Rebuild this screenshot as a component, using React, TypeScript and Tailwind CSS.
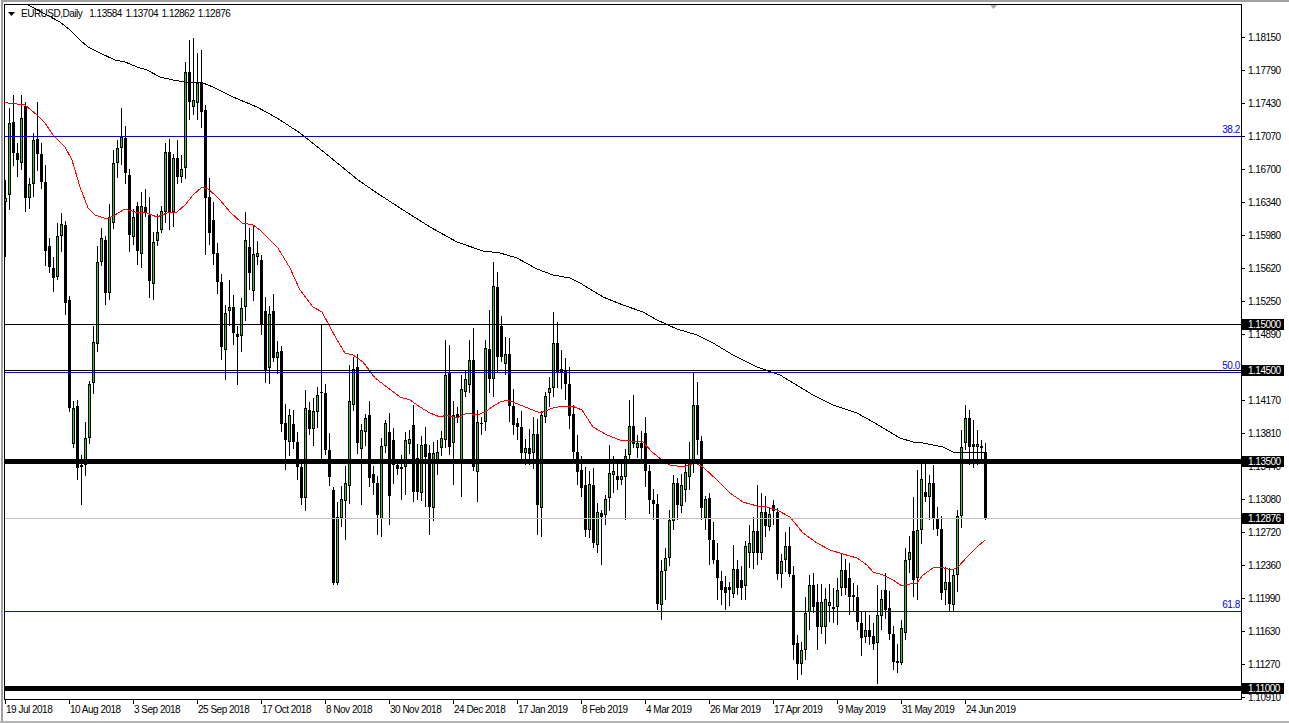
import React from "react";

// candle bodies in screen pixels: x, top, bottom, kind (g = up, b = down, d = doji)
const BARS = `5,198,202,g 9,123,195,g 13,122,153,b 17,153,160,b 21,118,163,g 25,106,198,b 29,184,198,g 33,140,184,g 37,139,154,b 41,154,182,b
45,182,251,b 49,246,267,b 53,268,278,b 57,236,277,g 61,224,236,g 65,225,303,b 69,300,408,b 73,408,444,g 77,406,468,b 81,465,467,d
85,438,465,g 89,384,438,g 93,342,383,g 97,262,344,g 101,238,262,g 105,240,293,b 109,217,293,g 113,163,223,g 117,148,163,g 121,137,148,g
125,138,173,b 129,175,235,b 133,217,237,g 137,206,251,b 141,206,254,g 145,207,213,b 149,215,281,b 153,242,284,g 157,232,241,g 161,211,230,g
165,152,212,g 169,152,213,b 173,158,212,g 177,158,177,b 181,169,177,g 185,72,168,g 189,72,102,b 193,100,107,g 197,83,103,g 201,82,112,b
205,110,198,b 209,197,233,b 213,220,254,b 217,253,282,b 221,282,347,b 225,313,350,g 229,307,311,g 233,307,333,b 237,334,337,b 241,308,336,g
245,240,307,g 249,247,273,b 253,254,291,g 257,253,257,g 261,260,325,b 265,311,370,b 269,314,368,g 273,311,358,b 277,352,358,g 281,351,424,b
285,423,440,b 289,415,442,g 293,424,442,b 297,442,467,b 301,467,498,b 305,408,498,g 309,410,429,b 313,411,429,g 317,395,412,g 321,392,393,d
325,393,450,b 329,450,477,b 333,490,583,b 337,517,583,g 341,499,518,g 345,483,501,g 349,401,486,g 353,369,405,g 357,367,443,b 361,430,449,g
365,418,432,g 369,415,478,b 373,474,483,b 377,483,515,b 381,446,519,g 385,423,446,g 389,432,496,b 393,440,465,b 397,465,469,b 401,467,469,g
405,440,467,g 409,439,444,g 413,425,492,b 417,458,492,b 421,445,493,g 425,444,457,b 429,453,507,b 433,453,508,g 437,452,463,g 441,438,448,g
445,375,440,g 449,373,447,b 453,415,443,g 457,414,417,d 461,389,460,g 465,379,392,g 469,360,385,g 473,360,467,b 477,422,472,g 481,423,424,d
485,348,422,g 489,349,379,b 493,286,379,g 497,287,357,b 501,326,357,b 505,354,364,g 509,354,406,b 513,406,425,b 517,423,427,d 521,427,453,b
525,448,453,g 529,448,454,d 533,434,453,g 537,434,505,b 541,415,508,g 545,396,417,g 549,388,393,g 553,343,388,g 557,343,373,b 561,369,373,d
565,371,384,b 569,384,416,b 573,414,452,b 577,452,472,b 581,470,488,b 585,485,530,b 589,484,530,g 593,485,543,b 597,512,545,g 601,513,517,d
605,499,515,g 609,473,498,g 613,471,475,g 617,476,480,b 621,476,480,g 625,456,477,g 629,426,455,g 633,426,444,b 637,443,448,g 641,443,448,d
645,433,471,b 649,471,500,b 653,500,504,d 657,504,604,b 661,571,605,g 665,558,571,g 669,520,558,g 673,483,521,g 677,483,505,b 681,485,506,g
685,472,490,g 689,463,477,g 693,405,463,g 697,405,440,b 701,441,508,b 705,499,518,g 709,498,540,b 713,540,560,b 717,560,578,b 721,581,590,b
725,587,593,b 729,587,590,d 733,569,594,g 737,569,588,b 741,580,588,b 745,546,586,g 749,543,553,g 753,531,553,g 757,531,553,b 761,512,553,g
765,512,526,b 769,514,527,g 773,505,511,d 777,512,574,b 781,561,574,g 785,546,560,g 789,546,574,b 793,575,645,b 797,643,664,b 801,650,664,g
805,613,650,g 809,585,612,g 813,585,607,b 817,602,627,b 821,602,627,g 825,599,627,g 829,602,606,g 833,607,609,d 837,590,607,g 841,570,588,g
845,570,588,b 849,578,597,b 853,595,597,d 857,597,622,b 861,623,638,b 865,630,637,g 869,630,637,b 873,636,644,b 877,615,643,g 881,599,616,g
885,590,610,b 889,608,634,b 893,634,662,b 897,661,663,d 901,628,663,g 905,560,633,g 909,552,560,g 913,531,580,b 917,530,578,g 921,479,530,g
925,492,497,b 929,483,497,g 933,483,518,b 937,518,529,b 941,529,593,b 945,582,590,g 949,582,604,b 953,575,605,g 957,516,575,g 961,447,516,g
965,418,443,g 969,418,447,b 973,444,447,d 977,444,447,g 981,446,448,d 985,452,518,b`;

// known long shadows: x -> [high, low]
const WICKS: Record<number, [number | null, number | null]> = {
  5: [180, 257], 9: [108, 210], 13: [95, null], 21: [95, 170], 25: [102, null], 37: [102, null],
  69: [null, 412], 77: [null, 480], 81: [455, 505], 121: [108, null], 125: [126, null], 129: [null, 252],
  149: [null, 298], 153: [null, 300], 185: [62, null], 189: [40, 120], 193: [38, 115], 197: [53, 120],
  201: [50, null], 205: [null, 255], 213: [null, 265], 225: [null, 380], 229: [280, null], 233: [295, 345],
  237: [null, 385], 245: [212, null], 253: [225, null], 261: [null, 335], 265: [null, 383], 281: [null, 432],
  285: [null, 470], 297: [null, 480], 301: [null, 505], 305: [390, null], 321: [325, 460], 333: [null, 585],
  337: [null, 585], 341: [null, 527], 345: [null, 540], 349: [365, null], 353: [357, null], 361: [null, 505],
  369: [null, 487], 373: [null, 495], 377: [null, 535], 381: [null, 537], 389: [null, 525], 401: [null, 500],
  405: [null, 495], 413: [405, null], 417: [null, 500], 425: [null, 507], 429: [null, 535], 445: [340, null],
  449: [345, null], 453: [null, 485], 461: [null, 497], 469: [340, null], 473: [328, null], 477: [null, 502],
  485: [340, null], 489: [310, null], 493: [262, null], 497: [272, null], 509: [null, 422], 537: [null, 535],
  541: [null, 537], 553: [312, 397], 557: [322, null], 577: [null, 485], 585: [null, 537], 597: [null, 553],
  601: [null, 565], 605: [null, 525], 609: [445, null], 625: [null, 520], 629: [400, null], 633: [395, null],
  653: [null, 520], 657: [null, 610], 661: [null, 620], 665: [null, 600], 673: [null, 530], 677: [null, 520],
  689: [442, null], 693: [372, null], 697: [382, 455], 701: [null, 520], 705: [null, 530], 709: [null, 565],
  717: [null, 600], 721: [null, 605], 725: [null, 610], 733: [545, null], 745: [null, 600], 757: [485, null],
  761: [493, 560], 773: [null, 525], 777: [null, 580], 793: [null, 660], 797: [null, 680], 801: [null, 675],
  805: [null, 660], 809: [575, 630], 817: [null, 650], 829: [null, 622], 833: [588, null], 837: [null, 625],
  845: [null, 595], 849: [null, 615], 857: [null, 630], 865: [null, 643], 873: [null, 650], 877: [585, 684],
  881: [590, null], 889: [null, 640], 893: [null, 670], 901: [null, 665], 905: [null, 640], 913: [497, null],
  917: [470, 600], 921: [463, null], 925: [460, null], 929: [null, 520], 933: [null, 530], 941: [null, 600],
  949: [null, 612], 953: [null, 612], 957: [510, null], 961: [null, 528], 965: [405, 450], 969: [410, 465],
  973: [420, 468], 977: [430, 465], 981: [440, 462], 985: [443, 520],
};

const MA200 = [
  [26, 4], [28, 5], [47, 15], [60, 22], [70, 30], [80, 40], [88, 47], [100, 53], [115, 60], [125, 62], [137, 67],
  [147, 70], [160, 77], [173, 80], [185, 82], [203, 83], [213, 87], [233, 97], [257, 107], [277, 118], [300, 133],
  [330, 157], [358, 180], [377, 193], [400, 208], [430, 227], [457, 242], [483, 251], [500, 253], [517, 258],
  [537, 269], [553, 275], [570, 278], [580, 283], [603, 297], [623, 305], [643, 312], [657, 320], [677, 329],
  [697, 335], [713, 343], [733, 355], [757, 367], [780, 375], [813, 395], [833, 405], [857, 413], [873, 422],
  [900, 438], [913, 442], [923, 443], [943, 447], [953, 452], [985, 452],
];

const MA50 = [
  [5, 102], [8, 103], [25, 105], [37, 115], [45, 123], [53, 135], [65, 147], [72, 160], [80, 187], [88, 208],
  [95, 215], [107, 219], [115, 215], [125, 209], [135, 212], [147, 213], [157, 217], [167, 213], [177, 212],
  [185, 205], [193, 195], [202, 187], [208, 189], [215, 195], [220, 200], [230, 212], [242, 223], [253, 225],
  [260, 230], [270, 240], [278, 248], [290, 268], [300, 290], [313, 307], [322, 312], [330, 327], [337, 340],
  [345, 353], [353, 355], [363, 362], [375, 378], [387, 387], [400, 397], [410, 400], [420, 407], [430, 413],
  [440, 417], [447, 415], [457, 418], [467, 413], [477, 415], [485, 412], [492, 407], [500, 402], [508, 400],
  [520, 405], [533, 410], [540, 413], [553, 408], [563, 406], [572, 406], [582, 410], [593, 427], [607, 435],
  [620, 440], [630, 441], [643, 442], [652, 452], [662, 460], [670, 465], [683, 467], [695, 463], [703, 467],
  [717, 480], [730, 493], [743, 502], [757, 506], [767, 507], [777, 510], [790, 517], [803, 533], [817, 543],
  [830, 550], [843, 554], [857, 558], [867, 565], [873, 572], [883, 575], [893, 580], [902, 586], [910, 584],
  [917, 583], [923, 575], [933, 568], [940, 567], [952, 570], [958, 567], [967, 557], [977, 547], [985, 540],
];

// 1.14530 sits fully under the 1.14500 box in the terminal, so it is left out
const PRICES = [
  ["1.18150", 37], ["1.17790", 70], ["1.17430", 103], ["1.17070", 136], ["1.16700", 169], ["1.16340", 202],
  ["1.15980", 235], ["1.15620", 268], ["1.15250", 301], ["1.14890", 334], ["1.14170", 400],
  ["1.13810", 433], ["1.13440", 466], ["1.13080", 499], ["1.12720", 532], ["1.12360", 565], ["1.11990", 598],
  ["1.11630", 631], ["1.11270", 664], ["1.10910", 697],
] as const;

const BOXES = [
  ["1.15000", 324], ["1.14500", 370], ["1.13500", 461], ["1.12876", 518], ["1.11000", 688],
] as const;

const DATES = [
  "19 Jul 2018", "10 Aug 2018", "3 Sep 2018", "25 Sep 2018", "17 Oct 2018", "8 Nov 2018", "30 Nov 2018",
  "24 Dec 2018", "17 Jan 2019", "8 Feb 2019", "4 Mar 2019", "26 Mar 2019", "17 Apr 2019", "9 May 2019",
  "31 May 2019", "24 Jun 2019",
];

function mulberry(seed: number) {
  return () => {
    seed |= 0;
    seed = (seed + 0x6d2b79f5) | 0;
    let t = Math.imul(seed ^ (seed >>> 15), 1 | seed);
    t = (t + Math.imul(t ^ (t >>> 7), 61 | t)) ^ t;
    return ((t ^ (t >>> 14)) >>> 0) / 4294967296;
  };
}

const candles = (() => {
  const rnd = mulberry(42);
  return BARS.trim()
    .split(/\s+/)
    .map((s) => {
      const [x, top, bottom, kind] = s.split(",");
      const t = +top;
      const b = +bottom;
      const w = WICKS[+x] || [null, null];
      const hi = w[0] ?? t - Math.round(3 + rnd() * 16);
      const lo = w[1] ?? b + Math.round(3 + rnd() * 16);
      return { x: +x, top: t, bottom: b, kind, hi, lo };
    });
})();

const pts = (list: number[][]) => list.map(([x, y]) => `${x},${y}`).join(" ");

const FONT = "'Liberation Sans', Arial, sans-serif";

function Plot() {
  return (
    <svg width={1236} height={694} viewBox="5 5 1236 694" className="block" fontFamily={FONT}>
      <g shapeRendering="crispEdges">
        {candles.map((c) => {
          const h = Math.max(1, c.bottom - c.top);
          return (
            <g key={c.x}>
              <rect x={c.x} y={c.hi} width={1} height={c.lo - c.hi} fill="#000" />
              <rect x={c.x - 1} y={c.top} width={3} height={h} fill="#000" />
              {c.kind === "g" && h > 2 && <rect x={c.x} y={c.top + 1} width={1} height={h - 2} fill="#22d022" />}
            </g>
          );
        })}
      </g>

      <g fill="none" strokeWidth={1} shapeRendering="crispEdges">
        <polyline points={pts(MA200)} stroke="#000" />
        <polyline points={pts(MA50)} stroke="#ff0000" />
      </g>

      <g shapeRendering="crispEdges">
        <rect x={5} y={136} width={1236} height={1} fill="#0000e0" />
        <rect x={5} y={324} width={1236} height={1} fill="#000" />
        <rect x={5} y={370} width={1236} height={1} fill="#000" />
        <rect x={5} y={372} width={1236} height={1} fill="#0000e0" />
        <rect x={5} y={459} width={1236} height={5} fill="#000" />
        <rect x={5} y={518} width={1236} height={1} fill="#c0c0c0" />
        <rect x={5} y={611} width={1236} height={1} fill="#0000e0" />
        <rect x={5} y={686} width={1236} height={5} fill="#000" />
      </g>

      <g fill="#0000ff" fontSize={10} letterSpacing={-0.4} textAnchor="end">
        <text x={1240} y={133}>38.2</text>
        <text x={1240} y={369}>50.0</text>
        <text x={1240} y={608}>61.8</text>
      </g>

      <polygon points="990,5 997,5 993.5,9" fill="#a8a8a8" />
    </svg>
  );
}

function PriceAxis() {
  return (
    <svg width={47} height={696} viewBox="1242 4 47 696" className="block overflow-visible" fontFamily={FONT} fontSize={10} letterSpacing={-0.5}>
      {PRICES.map(([p, y]) => (
        <g key={p}>
          <rect x={1242} y={y} width={3} height={1} fill="#000" shapeRendering="crispEdges" />
          <text x={1248} y={y + 4} fill="#000">{p}</text>
        </g>
      ))}
      {BOXES.map(([p, y]) => (
        <g key={p}>
          <rect x={1242} y={y - 5.5} width={42} height={11} fill="#000" shapeRendering="crispEdges" />
          <text x={1248} y={y + 4} fill="#fff">{p}</text>
        </g>
      ))}
    </svg>
  );
}

function TimeAxis() {
  return (
    <svg width={1238} height={20} viewBox="4 700 1238 20" className="block" fontFamily={FONT} fontSize={10} letterSpacing={-0.5}>
      {DATES.map((d, i) => {
        const x = 5 + i * 64;
        return (
          <g key={d}>
            <rect x={x} y={700} width={1} height={4} fill="#000" shapeRendering="crispEdges" />
            <text x={x + 1} y={713} fill="#000">{d}</text>
          </g>
        );
      })}
    </svg>
  );
}

export default function App() {
  return (
    <div className="w-[1289px] h-[723px] bg-white overflow-hidden font-['Liberation_Sans',Arial,sans-serif]">
      <div className="ml-[1px] border-l-2 border-t-2 border-[#a0a0a0] pl-[1px] pt-[2px]">
        <div className="flex">
          <div className="relative w-[1238px] h-[696px] border border-black">
            <Plot />
            {/* symbol header */}
            <div className="absolute left-[3px] top-[3px] flex items-center text-[10px] leading-[11px] tracking-[-0.5px] text-black">
              <svg width={7} height={4} viewBox="0 0 7 4" className="mr-[6px]">
                <polygon points="0,0 7,0 3.5,4" fill="#000" />
              </svg>
              <span>EURUSD,Daily</span>
              <div className="ml-[7px] flex gap-[3.5px]">
                <span>1.13584</span>
                <span>1.13704</span>
                <span>1.12862</span>
                <span>1.12876</span>
              </div>
            </div>
          </div>
          <PriceAxis />
        </div>
        <TimeAxis />
        <div className="h-[1px]" />
      </div>
      <div className="h-[2px] bg-[#b4b4b4]" />
    </div>
  );
}
